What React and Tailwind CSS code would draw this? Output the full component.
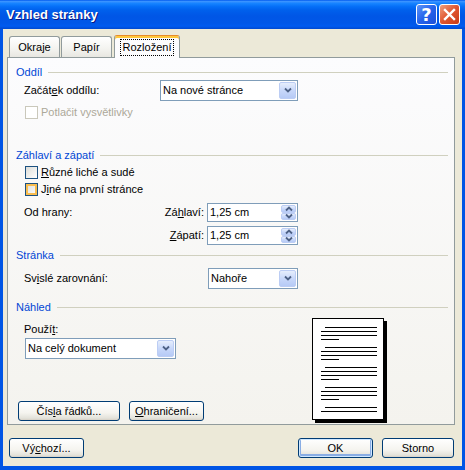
import React from "react";

const FONT = "font-['Liberation_Sans',Arial,sans-serif]";

function Chevron({ up }) {
  return (
    <svg width="8" height="5" viewBox="0 0 8 5" className="overflow-visible">
      <path d={up ? "M1 4.5L4 1.5L7 4.5" : "M1 0.5L4 3.5L7 0.5"} fill="none" stroke="#4D6185" strokeWidth="1.8" />
    </svg>
  );
}

function DropBtn() {
  return (
    <div className="w-[17px] self-stretch rounded-[2px] border border-[#BCCDF4] bg-[linear-gradient(to_bottom,#E6EEFC,#C8D8FA_50%,#B6CAF6)] flex items-center justify-center">
      <Chevron />
    </div>
  );
}

function Combo({ value, className }) {
  return (
    <div className={"flex bg-white border border-[#7F9DB9] p-px " + className}>
      <div className="flex-1 flex items-center pl-px">{value}</div>
      <DropBtn />
    </div>
  );
}

function Spin({ value }) {
  const half = "flex-1 rounded-[2px] border border-[#BCCDF4] bg-[linear-gradient(to_bottom,#E6EEFC,#C8D8FA_50%,#B6CAF6)] flex items-center justify-center";
  return (
    <div className="flex bg-white border border-[#7F9DB9] p-px w-[91px] h-[19px]">
      <div className="flex-1 flex items-center pl-px">{value}</div>
      <div className="w-[15px] flex flex-col">
        <div className={half}><Chevron up /></div>
        <div className={half}><Chevron /></div>
      </div>
    </div>
  );
}

function Check({ state }) {
  if (state === "disabled") return <div className="w-[13px] h-[13px] border border-[#CAC8BB] bg-white" />;
  return (
    <div
      className={
        "w-[13px] h-[13px] border border-[#1C5180] bg-[linear-gradient(135deg,#DCDCD7,#FFFFFF)]" +
        (state === "hover" ? " shadow-[inset_0_0_0_2px_#F9BD4F]" : "")
      }
    />
  );
}

function Btn({ children, className, def }) {
  return (
    <button
      type="button"
      className={
        "h-[20px] flex items-center justify-center rounded-[3px] border border-[#003C74] bg-[linear-gradient(to_bottom,#FFFFFF,#F5F4EF_60%,#E3E2DA_90%,#D6D0C5)] " +
        (def ? "shadow-[inset_0_0_0_1px_#CEE7FF,inset_0_-1px_0_2px_#89ADE4] " : "") +
        className
      }
    >
      {children}
    </button>
  );
}

function Group({ title }) {
  return (
    <div className="flex items-center h-[14px] pl-[8px] pr-[6px]">
      <span className="text-[#0046D5]">{title}</span>
      <div className="flex-1 h-px bg-[#D0D0BF] ml-[6px]" />
    </div>
  );
}

function Preview() {
  const ys = [0, 20, 40, 60];
  return (
    <svg width="75" height="105" viewBox="0 0 75 105">
      <rect x="3" y="3" width="72" height="102" fill="#000" />
      <rect x="0.5" y="0.5" width="71" height="101" fill="#fff" stroke="#000" />
      <g stroke="#000" strokeWidth="1">
        {ys.map((o) => (
          <g key={o}>
            <line x1="13" x2="65" y1={9.5 + o} y2={9.5 + o} />
            <line x1="9" x2="65" y1={13.5 + o} y2={13.5 + o} />
            <line x1="9" x2="65" y1={17.5 + o} y2={17.5 + o} />
            <line x1="9" x2="27" y1={21.5 + o} y2={21.5 + o} />
          </g>
        ))}
        <line x1="13" x2="65" y1="89.5" y2="89.5" />
        <line x1="9" x2="65" y1="93.5" y2="93.5" />
      </g>
    </svg>
  );
}

export default function App() {
  const tabIdle =
    "h-[21px] w-[51px] flex items-center justify-center border border-b-0 border-[#919B9C] rounded-t-[3px] bg-[linear-gradient(to_bottom,#FFFFFF,#F3F3EF_60%,#E8E7E1)]";
  return (
    <div className={FONT + " w-[465px] h-[470px] bg-[#0055E5] flex flex-col text-[11px] text-black leading-none select-none"}>
      {/* title bar */}
      <div className="h-[29px] shrink-0 flex items-center pl-[6px] pr-[5px] bg-[linear-gradient(to_bottom,#0058EE_0%,#3A93FF_5%,#1683FF_12%,#0670F8_22%,#0060EC_35%,#0056E6_55%,#0057E8_80%,#005BF0_90%,#0049D0_100%)]">
        <span className="flex-1 text-white font-bold text-[13px] [text-shadow:1px_1px_#0A1883]">Vzhled stránky</span>
        <div className="w-[21px] h-[21px] rounded-[3px] border border-white bg-[linear-gradient(135deg,#5C94F8,#2563EB_50%,#1D4FD8)] flex items-center justify-center text-white font-bold text-[18px] font-['DejaVu_Sans',sans-serif]">
          ?
        </div>
        <div className="ml-[2px] w-[21px] h-[21px] rounded-[3px] border border-white bg-[linear-gradient(135deg,#F0A080,#E0552F_50%,#C83A17)] flex items-center justify-center">
          <svg width="13" height="13" viewBox="0 0 13 13">
            <path d="M2 2L11 11M11 2L2 11" stroke="#fff" strokeWidth="2.4" strokeLinecap="square" />
          </svg>
        </div>
      </div>

      {/* client area */}
      <div className="flex-1 mx-[3px] mb-[4px] bg-[#ECE9D8] flex flex-col">
        {/* tabs */}
        <div className="flex items-end pl-[6px] pt-[6px]">
          <div className={tabIdle}>Okraje</div>
          <div className={tabIdle + " ml-px"}>Papír</div>
          <div className="ml-[2px] relative z-10 -mb-px h-[23px] w-[66px] flex items-center justify-center border-x border-t border-[#919B9C] border-t-[#E68B2C] rounded-t-[3px] bg-[#FCFCFE] shadow-[inset_0_2px_0_#FFC83C]">
            <span className="border border-dotted border-black px-[2px] py-[2px] mt-[1px]">Rozložení</span>
          </div>
        </div>

        {/* panel */}
        <div className="ml-[4px] w-[448px] h-[368px] border border-[#919B9C] bg-[linear-gradient(to_bottom,#FCFCFE,#F4F3EE)] flex flex-col">
          <div className="mt-[7px]">
            <Group title="Oddíl" />
          </div>
          <div className="mt-px ml-[16px] w-[274px] h-[21px] flex items-center justify-between">
            <span>
              Začát<u>e</u>k oddílu:
            </span>
            <Combo value="Na nové stránce" className="w-[138px] h-[21px]" />
          </div>
          <div className="mt-[5px] ml-[17px] h-[13px] flex items-center">
            <Check state="disabled" />
            <span className="ml-[3px] text-[#ACA899]">Potlačit vysvětlivky</span>
          </div>

          <div className="mt-[29px]">
            <Group title="Záhlaví a zápatí" />
          </div>
          <div className="mt-[4px] ml-[17px] h-[13px] flex items-center">
            <Check />
            <span className="ml-[3px]">
              <u>R</u>ůzné liché a sudé
            </span>
          </div>
          <div className="mt-[4px] ml-[17px] h-[13px] flex items-center">
            <Check state="hover" />
            <span className="ml-[3px]">
              J<u>i</u>né na první stránce
            </span>
          </div>
          <div className="mt-[7px] ml-[16px] w-[274px] h-[19px] flex items-center">
            <span className="flex-1">Od hrany:</span>
            <span className="mr-[3px]">
              Zá<u>h</u>laví:
            </span>
            <Spin value="1,25 cm" />
          </div>
          <div className="mt-[4px] ml-[16px] w-[274px] h-[19px] flex items-center justify-end">
            <span className="mr-[3px]">
              <u>Z</u>ápatí:
            </span>
            <Spin value="1,25 cm" />
          </div>

          <div className="mt-[3px]">
            <Group title="Stránka" />
          </div>
          <div className="mt-[6px] ml-[16px] w-[274px] h-[21px] flex items-center justify-between">
            <span>
              Sv<u>i</u>slé zarovnání:
            </span>
            <Combo value="Nahoře" className="w-[90px] h-[21px]" />
          </div>

          <div className="mt-[11px]">
            <Group title="Náhled" />
          </div>
          <div className="flex">
            <div className="w-[304px] flex flex-col">
              <div className="mt-[9px] ml-[16px] h-[13px] flex items-center">
                <span>
                  Použí<u>t</u>:
                </span>
              </div>
              <Combo value="Na celý dokument" className="mt-[2px] ml-[17px] w-[151px] h-[21px]" />
              <div className="mt-[42px] ml-[10px] flex">
                <Btn className="w-[102px]">
                  Čís<u>l</u>a řádků...
                </Btn>
                <Btn className="ml-[9px] w-[75px]">
                  <u>O</u>hraničení...
                </Btn>
              </div>
            </div>
            <div className="mt-[4px]">
              <Preview />
            </div>
          </div>
        </div>

        {/* bottom buttons */}
        <div className="mt-[13px] flex pl-[6px] pr-[8px]">
          <Btn className="w-[75px]">
            Vý<u>c</u>hozí...
          </Btn>
          <div className="flex-1" />
          <Btn def className="w-[75px]">
            OK
          </Btn>
          <Btn className="ml-[9px] w-[72px]">Storno</Btn>
        </div>
      </div>
    </div>
  );
}
